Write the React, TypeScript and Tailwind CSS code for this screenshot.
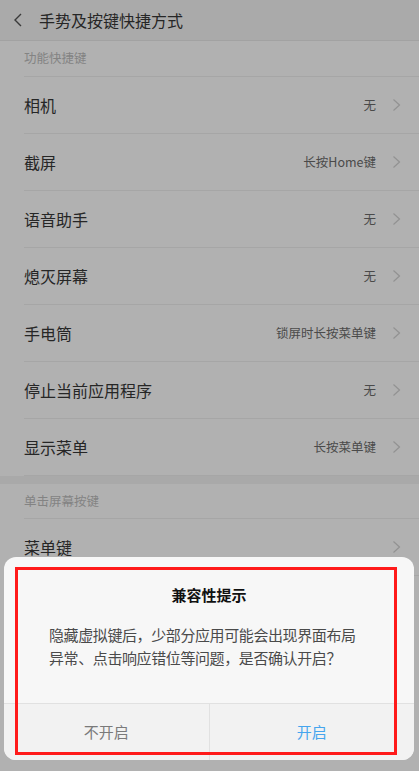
import React from "react";

const rows1 = [
  { title: "相机", value: "无" },
  { title: "截屏", value: "长按Home键" },
  { title: "语音助手", value: "无" },
  { title: "熄灭屏幕", value: "无" },
  { title: "手电筒", value: "锁屏时长按菜单键" },
  { title: "停止当前应用程序", value: "无" },
  { title: "显示菜单", value: "长按菜单键" },
];

const Chevron = () => (
  <svg width="9" height="14" viewBox="0 0 9 14" fill="none" className="shrink-0">
    <path d="M1.5 1.5 L7.5 7 L1.5 12.5" stroke="#929292" strokeWidth="1.2" />
  </svg>
);

const Row = ({ title, value }: { title: string; value?: string }) => (
  <div className="h-[57px] flex items-center border-b border-[#a6a6a6] pr-[18px]">
    <span className="flex-1 text-[16px] text-[#262626]">{title}</span>
    {value && <span className="text-[12.5px] text-[#4a4a4a] mr-[16px]">{value}</span>}
    <Chevron />
  </div>
);

export default function App() {
  return (
    <div
      className="relative w-[419px] h-[771px] overflow-hidden bg-[#b1b1b1]"
      style={{ fontFamily: '"Noto Sans CJK SC", "Noto Sans", sans-serif' }}
    >
      <div className="h-[41px] bg-[#aaaaaa] border-b border-[#a2a2a2] flex items-center">
        <svg width="10" height="14" viewBox="0 0 10 14" fill="none" className="ml-[13px]">
          <path d="M8 1 L2 7 L8 13" stroke="#3a3a3a" strokeWidth="1.4" />
        </svg>
        <span className="ml-[16px] text-[16px] text-[#262626]">手势及按键快捷方式</span>
      </div>

      <div className="pl-[24px]">
        <div className="h-[36px] flex items-center border-b border-[#a6a6a6] text-[12.5px] text-[#838383]">
          功能快捷键
        </div>
        {rows1.map((r) => (
          <Row key={r.title} title={r.title} value={r.value} />
        ))}
      </div>

      <div className="h-[8px] bg-[#a9a9a9]" />

      <div className="pl-[24px]">
        <div className="h-[35px] flex items-center border-b border-[#a6a6a6] text-[12.5px] text-[#838383]">
          单击屏幕按键
        </div>
        <Row title="菜单键" />
      </div>

      {/* dialog */}
      <div className="absolute left-[4px] top-[557px] w-[410px] h-[203px] rounded-[12px] bg-[#f7f7f7] overflow-hidden flex flex-col">
        <div className="flex-1 flex flex-col pt-[27px]">
          <div className="text-center text-[15px] font-bold text-[#111111] leading-[22px]">兼容性提示</div>
          <div className="mt-[17px] pl-[45px] text-[15px] tracking-[-0.4px] leading-[23px] text-[#4a4a4a] whitespace-nowrap">
            <div>隐藏虚拟键后，少部分应用可能会出现界面布局</div>
            <div>异常、点击响应错位等问题，是否确认开启？</div>
          </div>
        </div>
        <div className="h-[57px] flex border-t border-[#e1e1e1] bg-[#f2f2f2]">
          <div className="flex-1 flex items-center justify-center text-[15px] text-[#7a7a7a] border-r border-[#e1e1e1]">
            不开启
          </div>
          <div className="flex-1 flex items-center justify-center text-[15px] text-[#45a5ee]">
            开启
          </div>
        </div>
      </div>

      <div className="absolute left-[15px] top-[567px] w-[382px] h-[188px] border-[3px] border-[#ff1a1a] pointer-events-none" />
    </div>
  );
}
